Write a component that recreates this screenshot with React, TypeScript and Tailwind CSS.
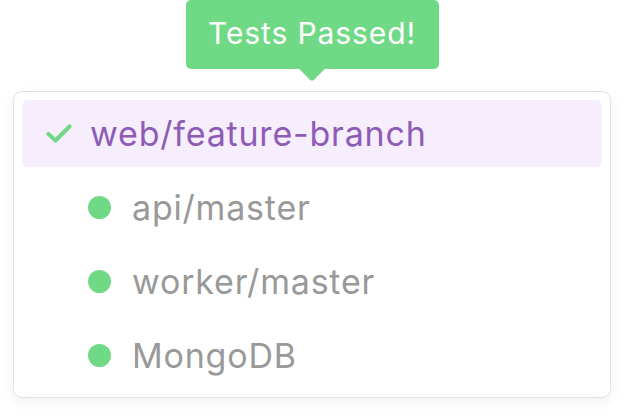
import React from "react";

const font = { fontFamily: "Inter, 'Noto Sans', sans-serif" };

function Row({ label }: { label: string }) {
  return (
    <div className="flex h-[67px] items-center pl-[66px]">
      <span className="h-[23px] w-[23px] rounded-full bg-[#70d986]" />
      <span className="ml-[21px] text-[34px] tracking-[0.8px] text-[#999999]">{label}</span>
    </div>
  );
}

export default function App() {
  return (
    <div className="flex h-[418px] w-[624px] flex-col items-center bg-white" style={font}>
      <div className="relative flex h-[69px] w-[253px] items-center justify-center rounded-[5px] bg-[#70d986]">
        <span className="absolute left-1/2 top-[59px] h-[19px] w-[19px] -translate-x-1/2 rotate-45 rounded-[3px] bg-[#70d986]" />
        <span className="relative -mt-[2px] text-[30px] tracking-[0.9px] text-white">Tests Passed!</span>
      </div>
      <div className="mt-[22px] w-[598px] rounded-[9px] border border-[#e2e2e2] bg-white p-2 shadow-[0_4px_14px_rgba(0,0,0,0.06)]">
        <div className="flex flex-col gap-[7px]">
          <div className="flex h-[67px] items-center rounded-[6px] bg-[#f6eefc] pl-[24px]">
            <svg width="26" height="21" viewBox="0 0 26 21" fill="none">
              <path d="M2.5 11 L9.5 17.5 L23.5 3.5" stroke="#70d986" strokeWidth="4.2" strokeLinecap="round" strokeLinejoin="round" />
            </svg>
            <span className="ml-[18px] text-[34px] tracking-[0.8px] text-[#8e5cb6]">web/feature-branch</span>
          </div>
          <Row label="api/master" />
          <Row label="worker/master" />
          <Row label="MongoDB" />
        </div>
      </div>
    </div>
  );
}
